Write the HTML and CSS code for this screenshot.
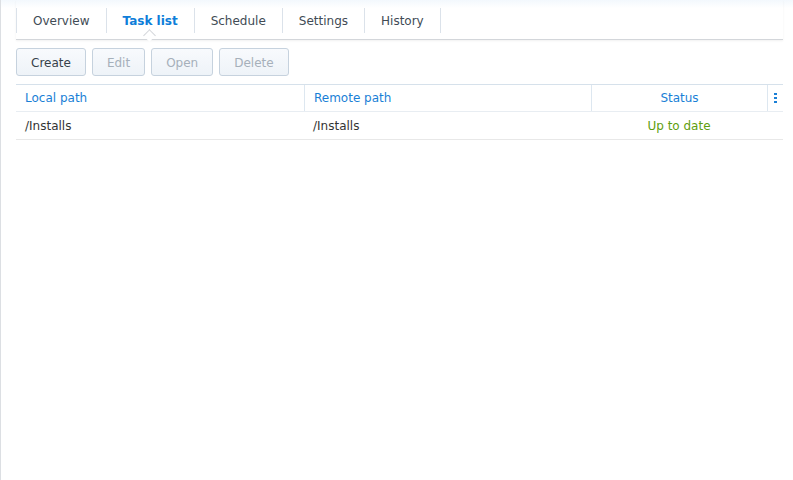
FILE: index.html
```html
<!DOCTYPE html>
<html>
<head>
<meta charset="utf-8">
<link rel="stylesheet" href="styles.css">
</head>
<body>
<div class="app">
  <div class="tabbar">
    <div class="tabs">
      <div class="tab">Overview</div>
      <div class="tab active">Task list<span class="notch"></span></div>
      <div class="tab">Schedule</div>
      <div class="tab">Settings</div>
      <div class="tab last">History</div>
    </div>
  </div>
  <div class="toolbar">
    <button class="btn">Create</button>
    <button class="btn disabled">Edit</button>
    <button class="btn disabled">Open</button>
    <button class="btn disabled">Delete</button>
  </div>
  <div class="grid">
    <div class="row head">
      <div class="cell c1">Local path</div>
      <div class="cell c2">Remote path</div>
      <div class="cell c3">Status</div>
      <div class="cell c4"><svg width="3" height="10" viewBox="0 0 3 10"><rect x="0" y="0" width="3" height="2" fill="#1a7fd6"/><rect x="0" y="4" width="3" height="2" fill="#1a7fd6"/><rect x="0" y="8" width="3" height="2" fill="#1a7fd6"/></svg></div>
    </div>
    <div class="row body">
      <div class="cell c1">/Installs</div>
      <div class="cell c2">/Installs</div>
      <div class="cell c3 ok">Up to date</div>
      <div class="cell c4"></div>
    </div>
  </div>
</div>
</body>
</html>
```
FILE: styles.css
```css
html, body {
  margin: 0;
  padding: 0;
  background: #fff;
}
body {
  font-family: "DejaVu Sans", Verdana, sans-serif;
  font-size: 12px;
  color: #333;
}
.app {
  width: 793px;
  height: 480px;
  border-left: 1px solid #dcdfe3;
  background: linear-gradient(#f3f8fd 0, #ffffff 8px);
  box-sizing: border-box;
  padding: 0 10px 0 15px;
}
.tabbar {
  padding-top: 8px;
  height: 31px;
  border-bottom: 1px solid #d3d6da;
  box-shadow: 0 1px 2px rgba(0,0,0,0.06);
  position: relative;
}
.tabs {
  display: flex;
  height: 25px;
}
.tab {
  position: relative;
  border-left: 1px solid #dbe2ea;
  padding: 1px 16px 0 16px;
  line-height: 24px;
  color: #414b55;
  white-space: nowrap;
}
.tab.last {
  border-right: 1px solid #dbe2ea;
}
.tab.active {
  color: #0e7ed9;
  font-weight: bold;
}
.notch {
  position: absolute;
  left: 50%;
  bottom: -7px;
  width: 8px;
  height: 8px;
  margin-left: -5px;
  background: #fff;
  border-left: 1px solid #d3d6da;
  border-top: 1px solid #d3d6da;
  transform: rotate(45deg);
}
.toolbar {
  display: flex;
  gap: 6px;
  padding-top: 8px;
  height: 28px;
}
.btn {
  font-family: inherit;
  font-size: 12px;
  height: 28px;
  padding: 2px 14px 0 14px;
  border: 1px solid #c6d2de;
  border-radius: 3px;
  background: linear-gradient(#f8fafd, #eef3f8);
  color: #37414b;
}
.btn.disabled {
  color: #a6b0ba;
}
.grid {
  margin-top: 8px;
  width: 767px;
  border-top: 1px solid #d6e1eb;
}
.row {
  display: flex;
}
.row.head {
  height: 26px;
  border-bottom: 1px solid #e8edf2;
  color: #1a7fd6;
}
.row.body {
  height: 27px;
  border-bottom: 1px solid #e8e8e8;
}
.cell {
  display: flex;
  align-items: center;
  padding: 0 9px;
  box-sizing: border-box;
  white-space: nowrap;
}
.head .cell + .cell {
  border-left: 1px solid #dde7f0;
}
.c1 { width: 288px; }
.c2 { width: 287px; }
.c3 { width: 176px; justify-content: center; }
.c4 { width: 16px; padding: 0; justify-content: center; }
.ok { color: #5f9e0e; }
```
